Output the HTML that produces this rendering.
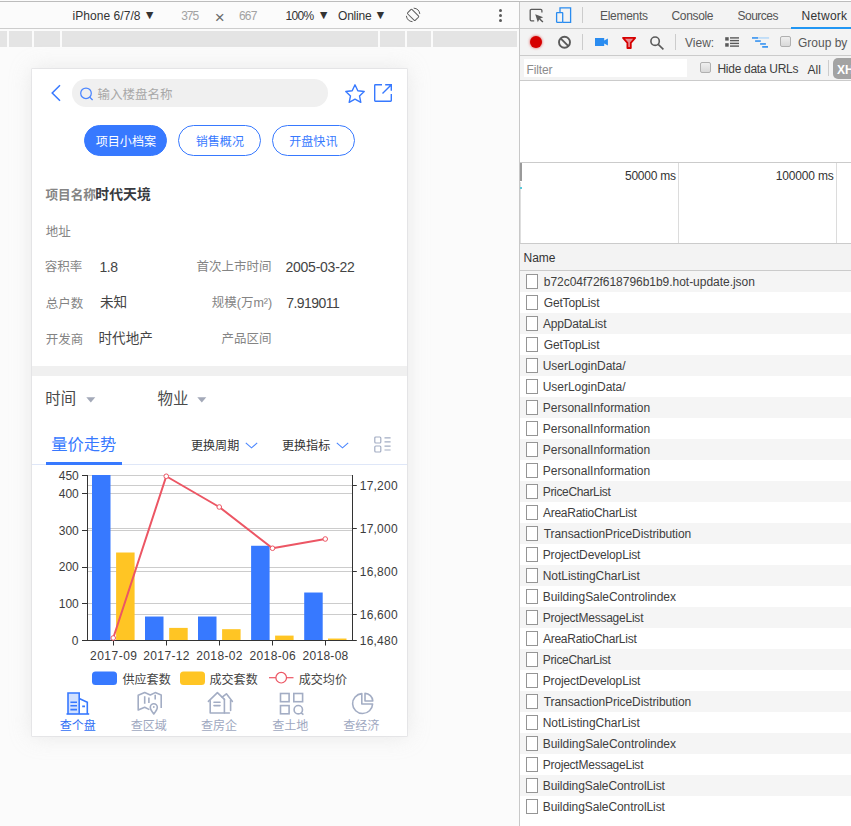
<!DOCTYPE html><html lang="zh"><head><meta charset="utf-8"><title>page</title><style>
*{box-sizing:border-box;margin:0;padding:0}
html,body{width:851px;height:826px;overflow:hidden;background:#fff}
body{position:relative;font-family:"Liberation Sans","Noto Sans CJK SC",sans-serif;font-size:12px;color:#333}
.abs{position:absolute}
.t{position:absolute;white-space:nowrap;line-height:1}
#left{position:absolute;left:0;top:0;width:519px;height:826px;background:#fbfbfb;overflow:hidden}
#topline{position:absolute;left:0;top:1px;width:851px;height:1px;background:#bcbcbc;z-index:9}
#dtb{position:absolute;left:0;top:2px;width:519px;height:26px;background:#fbfbfb}
#dtbb{position:absolute;left:0;top:28px;width:519px;height:1px;background:#cdcdcd}
#mq{position:absolute;left:0;top:31px;width:517px;height:16px;background:#e4e4e4}
#mq i{position:absolute;top:0;width:2px;height:16px;background:#fbfbfb}
#frame{position:absolute;left:32px;top:69px;width:375px;height:667px;background:#fff;box-shadow:0 0 0 .5px #d8d8dc,0 0 20px rgba(200,200,200,.36);overflow:hidden}
#divider{position:absolute;left:519px;top:2px;width:1px;height:824px;background:#c8c8c8}
#search{position:absolute;left:40px;top:10px;width:256px;height:28px;border-radius:14px;background:#f0f0f0}
.pill{position:absolute;top:56px;width:83px;height:31px;border-radius:16px;border:1px solid #3779ff;background:#fff}
.pill.on{background:#3779ff}
#band{position:absolute;left:0;top:297px;width:375px;height:10px;background:#f0f0f0}
#right{position:absolute;left:520px;top:0;width:331px;height:826px;background:#fff;overflow:hidden}
.bar{position:absolute;left:0;width:331px;background:#f3f3f3}
.hl{position:absolute;left:0;width:331px;height:1px;background:#cbcbcb}
.row{position:absolute;left:0;width:331px;height:21px}
.row.odd{background:#f5f5f5}
.row b{position:absolute;left:6px;top:3px;width:12px;height:15px;border:1px solid #959595;background:#fff}
.cb{position:absolute;width:11px;height:11px;border:1px solid #b0b0b0;border-radius:2px;background:linear-gradient(#efefef,#d9d9d9)}
.vs{position:absolute;width:1px;height:16px;background:#ccc}
</style></head><body>
<div id="left">
<div id="dtb"></div><div id="dtbb"></div>
<div id="mq"><i style="left:7px"></i><i style="left:32px"></i><i style="left:60px"></i><i style="left:378px"></i><i style="left:405px"></i><i style="left:431px"></i></div>
<div class="t" style="left:72.5px;top:10px;color:#333;font-family:'Liberation Sans',sans-serif;font-size:12px;letter-spacing:0.055px;">iPhone 6/7/8</div>
<div class="t" style="left:181.25px;top:10px;color:#a2a2a2;font-family:'Liberation Sans',sans-serif;font-size:12px;letter-spacing:-1.05px;">375</div>
<div class="t" style="left:239px;top:10px;color:#a2a2a2;font-family:'Liberation Sans',sans-serif;font-size:12px;letter-spacing:-0.8px;">667</div>
<div class="t" style="left:285.5px;top:10px;color:#333;font-family:'Liberation Sans',sans-serif;font-size:12px;letter-spacing:-0.667px;">100%</div>
<div class="t" style="left:338px;top:10px;color:#333;font-family:'Liberation Sans',sans-serif;font-size:12px;letter-spacing:-0.2px;">Online</div>
<div class="t" style="left:214.75px;top:9px;color:#6a6a6a;font-family:'Liberation Sans',sans-serif;font-size:17px;">×</div>
<div class="t" style="left:146px;top:10px;color:#333;font-family:'DejaVu Sans',sans-serif;font-size:9.5px;">▼</div>
<div class="t" style="left:320px;top:10px;color:#333;font-family:'DejaVu Sans',sans-serif;font-size:9.5px;">▼</div>
<div class="t" style="left:376.75px;top:10px;color:#333;font-family:'DejaVu Sans',sans-serif;font-size:9.5px;">▼</div>
<svg class="abs" style="left:404px;top:6px" width="18" height="18" viewBox="0 0 18 18"><g fill="none" stroke="#5c5c5c" stroke-width="1"><path d="M9.69 2.13 A6.8 6.8 0 0 1 15.83 7.95 M8.51 15.67 A6.8 6.8 0 0 1 2.37 9.85"/><rect x="6" y="3.5" width="6.2" height="10.8" rx="1" transform="rotate(-45 9.1 8.9)"/></g></svg>
<svg class="abs" style="left:498px;top:9px" width="5" height="13" viewBox="0 0 5 13"><g fill="#5a5a5a"><circle cx="2.5" cy="1.6" r="1.5"/><circle cx="2.5" cy="6.5" r="1.5"/><circle cx="2.5" cy="11.4" r="1.5"/></g></svg>
<div id="frame">
<svg class="abs" style="left:18px;top:15px" width="12" height="18" viewBox="0 0 12 18"><path d="M10 1.2 L2.2 9 L10 16.8" fill="none" stroke="#3779ff" stroke-width="1.5"/></svg>
<div id="search"></div>
<svg class="abs" style="left:47px;top:17px" width="16" height="16" viewBox="0 0 16 16"><g fill="none" stroke="#4a85ff" stroke-width="1.25"><circle cx="7" cy="7.3" r="5.3"/><path d="M10.8 11.2 L13.6 14"/></g></svg>
<svg class="abs" style="left:312px;top:14px" width="22" height="21" viewBox="0 0 22 21"><path d="M11 1.8 L13.8 7.7 L20.2 8.5 L15.5 12.9 L16.8 19.3 L11 16.1 L5.2 19.3 L6.5 12.9 L1.8 8.5 L8.2 7.7 Z" fill="none" stroke="#3779ff" stroke-width="1.4" stroke-linejoin="round"/></svg>
<svg class="abs" style="left:341px;top:14px" width="20" height="20" viewBox="0 0 20 20"><g fill="none" stroke="#3779ff" stroke-width="1.4"><path d="M9 1.7 H2.4 Q1.7 1.7 1.7 2.4 V17.6 Q1.7 18.3 2.4 18.3 H17.6 Q18.3 18.3 18.3 17.6 V11"/><path d="M9.5 10.5 L18.3 1.7 M12.2 1.7 H18.3 V7.8"/></g></svg>
<div class="pill on" style="left:52px"></div><div class="pill" style="left:146px"></div><div class="pill" style="left:240px"></div>
<div id="band"></div>
<svg class="abs" style="left:54px;top:328px" width="10" height="6" viewBox="0 0 10 6"><path d="M0.3 0.3 H9.3 L4.8 5.4 Z" fill="#a3a9b8"/></svg>
<svg class="abs" style="left:165px;top:328px" width="10" height="6" viewBox="0 0 10 6"><path d="M0.3 0.3 H9.3 L4.8 5.4 Z" fill="#a3a9b8"/></svg>
<div class="abs" style="left:0;top:395px;width:375px;height:1px;background:#dfe7f8"></div>
<div class="abs" style="left:14px;top:393px;width:76px;height:3px;background:#3779ff"></div>
<svg class="abs" style="left:213px;top:372.5px" width="13" height="7" viewBox="0 0 13 7"><path d="M0.8 0.9 L6.5 5.8 L12.2 0.9" fill="none" stroke="#4a86ff" stroke-width="1.1"/></svg>
<svg class="abs" style="left:304px;top:372.5px" width="13" height="7" viewBox="0 0 13 7"><path d="M0.8 0.9 L6.5 5.8 L12.2 0.9" fill="none" stroke="#4a86ff" stroke-width="1.1"/></svg>
<svg class="abs" style="left:342px;top:367px" width="18" height="17" viewBox="0 0 18 17"><g fill="none" stroke="#a3adc4" stroke-width="1.2"><rect x="0.8" y="1" width="6" height="6" rx="1"/><rect x="0.8" y="10" width="6" height="6" rx="1"/><path d="M10.5 1.8 H16.6 M10.5 5.8 H16.6 M10.5 10.2 H16.6 M10.5 14 H16.6"/></g></svg>
<svg class="abs" style="left:0;top:0" width="375" height="667" viewBox="0 0 375 667"><path d="M55.0 406.5 H320.5" stroke="#ccc"/><path d="M55.0 424.5 H320.5" stroke="#ccc"/><path d="M55.0 461.5 H320.5" stroke="#ccc"/><path d="M55.0 498.5 H320.5" stroke="#ccc"/><path d="M55.0 534.5 H320.5" stroke="#ccc"/><path d="M55.0 416.5 H320.5" stroke="#ccc"/><path d="M55.0 459.5 H320.5" stroke="#ccc"/><path d="M55.0 502.5 H320.5" stroke="#ccc"/><path d="M55.0 545.5 H320.5" stroke="#ccc"/><rect x="60.00" y="406.00" width="18.50" height="165.00" fill="#3779ff"/><rect x="84.10" y="483.51" width="18.50" height="87.49" fill="#ffc524"/><rect x="113.00" y="547.53" width="18.50" height="23.47" fill="#3779ff"/><rect x="137.20" y="558.90" width="18.50" height="12.10" fill="#ffc524"/><rect x="166.00" y="547.53" width="18.50" height="23.47" fill="#3779ff"/><rect x="190.10" y="560.18" width="18.50" height="10.82" fill="#ffc524"/><rect x="219.10" y="476.77" width="18.50" height="94.23" fill="#3779ff"/><rect x="243.10" y="566.60" width="18.50" height="4.40" fill="#ffc524"/><rect x="272.20" y="523.52" width="18.50" height="47.48" fill="#3779ff"/><rect x="296.00" y="569.53" width="18.50" height="1.47" fill="#ffc524"/><path d="M55.5 406.0 V572.0 M320.5 406.0 V572.0 M55.0 571.5 H320.5" stroke="#333" fill="none"/><path d="M50.0 406.5 H55.0" stroke="#333"/><path d="M50.0 424.5 H55.0" stroke="#333"/><path d="M50.0 461.5 H55.0" stroke="#333"/><path d="M50.0 498.5 H55.0" stroke="#333"/><path d="M50.0 534.5 H55.0" stroke="#333"/><path d="M50.0 571.5 H55.0" stroke="#333"/><path d="M320.5 416.5 H324.8" stroke="#333"/><path d="M320.5 459.5 H324.8" stroke="#333"/><path d="M320.5 502.5 H324.8" stroke="#333"/><path d="M320.5 545.5 H324.8" stroke="#333"/><path d="M320.5 571.5 H324.8" stroke="#333"/><path d="M81.5 571.0 V576.5" stroke="#333"/><path d="M134.5 571.0 V576.5" stroke="#333"/><path d="M187.5 571.0 V576.5" stroke="#333"/><path d="M240.5 571.0 V576.5" stroke="#333"/><path d="M293.5 571.0 V576.5" stroke="#333"/><polyline points="81.25,569.00 134.25,407.25 187.25,438.00 240.50,479.25 293.25,470.00" fill="none" stroke="#ec5664" stroke-width="2" stroke-linejoin="round"/><circle cx="81.25" cy="569.00" r="2.3" fill="#fff" stroke="#ec5664" stroke-width="1"/><circle cx="134.25" cy="407.25" r="2.3" fill="#fff" stroke="#ec5664" stroke-width="1"/><circle cx="187.25" cy="438.00" r="2.3" fill="#fff" stroke="#ec5664" stroke-width="1"/><circle cx="240.50" cy="479.25" r="2.3" fill="#fff" stroke="#ec5664" stroke-width="1"/><circle cx="293.25" cy="470.00" r="2.3" fill="#fff" stroke="#ec5664" stroke-width="1"/><rect x="60" y="602.5" width="25" height="13.5" rx="3.5" fill="#3779ff"/><rect x="148" y="602.5" width="25" height="13.5" rx="3.5" fill="#ffc524"/><path d="M237 608.7 H261.5" stroke="#ec5664" stroke-width="1.2"/><circle cx="249.2" cy="608.7" r="5.3" fill="#fff" stroke="#ec5664" stroke-width="1.2"/></svg>
<svg class="abs" style="left:34px;top:622.5px" width="24" height="24" viewBox="0 0 24 24"><rect x="2" y="1" width="11" height="21" fill="#d2e1ff"/><g fill="none" stroke="#3779ff" stroke-width="1.6"><path d="M2 22 V1 H13.2 V22"/><path d="M13.2 6.6 L21.3 10.2 V22"/><path d="M0.5 22 H23.2"/><path d="M4.4 10.2 H11 M4.4 13.8 H11 M4.4 17.6 H11 M16.2 14.4 H19"/></g></svg>
<svg class="abs" style="left:104.5px;top:622px" width="26" height="25" viewBox="0 0 26 25"><g fill="none" stroke="#a3adc4" stroke-width="1.6" stroke-linejoin="round"><path d="M12.4 18.6 L7.7 16.3 L1.2 19 V4.3 L7.7 1.6 L13.3 4 L18.2 1.6 L24.2 4 V17"/><path d="M7.7 5.2 V12.7 M11.9 6.6 V12 M18.2 3.8 V8.5"/><path d="M16.8 23 C14.6 20.2 13.3 18.4 13.3 16.2 A3.5 3.5 0 0 1 20.3 16.2 C20.3 18.4 19 20.2 16.8 23 Z" fill="#fff"/></g><circle cx="16.8" cy="16" r="0.9" fill="#a3adc4"/></svg>
<svg class="abs" style="left:174.5px;top:622px" width="27" height="24" viewBox="0 0 27 24"><g fill="none" stroke="#a3adc4" stroke-width="1.6" stroke-linejoin="round" stroke-linecap="round"><path d="M1.4 10.4 L10.4 1.6 L17.4 8.4"/><path d="M3.2 9.8 V22 H22.4"/><path d="M17.4 8.4 V22"/><path d="M15.2 6.2 L19.4 2.8 L25.4 10.4"/><path d="M23.6 9.6 V19.4"/><path d="M7 11.2 H13 M7 14.6 H13"/></g></svg>
<svg class="abs" style="left:246.5px;top:622.5px" width="26" height="24" viewBox="0 0 26 24"><g fill="none" stroke="#a3adc4" stroke-width="1.6"><rect x="1.5" y="1.5" width="8.6" height="8.2"/><rect x="14.8" y="1.5" width="8.8" height="8.2"/><rect x="1.5" y="13.6" width="8.6" height="8.2"/><circle cx="19.3" cy="17.7" r="4.2"/><path d="M22.2 20.8 L24.4 22.6"/></g></svg>
<svg class="abs" style="left:318.5px;top:622.5px" width="24" height="24" viewBox="0 0 24 24"><g fill="none" stroke="#a3adc4" stroke-width="1.6" stroke-linejoin="round"><path d="M10.8 1.6 A10 10 0 1 0 21.6 12 H10.8 Z"/><path d="M14 1.4 V9 H21.8 A8 8 0 0 0 14 1.4 Z"/></g></svg>
<div class="t" style="left:65.5px;top:20px;color:#a8a8a8;font-family:'Liberation Sans','Noto Sans CJK SC',sans-serif;font-size:12.5px;">输入楼盘名称</div>
<div class="t" style="left:63.75px;top:67px;color:#fff;font-family:'Liberation Sans','Noto Sans CJK SC',sans-serif;font-size:12.05px;">项目小档案</div>
<div class="t" style="left:163.75px;top:67px;color:#3779ff;font-family:'Liberation Sans','Noto Sans CJK SC',sans-serif;font-size:12.05px;">销售概况</div>
<div class="t" style="left:257.25px;top:67px;color:#3779ff;font-family:'Liberation Sans','Noto Sans CJK SC',sans-serif;font-size:12.05px;">开盘快讯</div>
<div class="t" style="left:13.5px;top:120px;color:#858585;font-family:'Liberation Sans','Noto Sans CJK SC',sans-serif;font-weight:bold;font-size:12.6px;">项目名称</div>
<div class="t" style="left:63.25px;top:119px;color:#383a40;font-family:'Liberation Sans','Noto Sans CJK SC',sans-serif;font-weight:bold;font-size:13.9px;">时代天境</div>
<div class="t" style="left:13.75px;top:157px;color:#848484;font-family:'Liberation Sans','Noto Sans CJK SC',sans-serif;font-size:12.5px;">地址</div>
<div class="t" style="left:12.75px;top:192px;color:#848484;font-family:'Liberation Sans','Noto Sans CJK SC',sans-serif;font-size:12.5px;">容积率</div>
<div class="t" style="left:13.75px;top:229px;color:#848484;font-family:'Liberation Sans','Noto Sans CJK SC',sans-serif;font-size:12.5px;">总户数</div>
<div class="t" style="left:13.75px;top:265px;color:#848484;font-family:'Liberation Sans','Noto Sans CJK SC',sans-serif;font-size:12.5px;">开发商</div>
<div class="t" style="left:67.5px;top:191px;color:#444;font-family:'Liberation Sans','Noto Sans CJK SC',sans-serif;font-size:14px;letter-spacing:-0.5px;">1.8</div>
<div class="t" style="left:68px;top:227px;color:#444;font-family:'Liberation Sans','Noto Sans CJK SC',sans-serif;font-size:13.6px;">未知</div>
<div class="t" style="left:66.5px;top:263px;color:#444;font-family:'Liberation Sans','Noto Sans CJK SC',sans-serif;font-size:13.6px;">时代地产</div>
<div class="t" style="left:164.5px;top:192px;color:#848484;font-family:'Liberation Sans','Noto Sans CJK SC',sans-serif;font-size:12.5px;">首次上市时间</div>
<div class="t" style="left:179.75px;top:228px;color:#848484;font-family:'Liberation Sans','Noto Sans CJK SC',sans-serif;font-size:12.5px;">规模(万m²)</div>
<div class="t" style="left:189.5px;top:264px;color:#848484;font-family:'Liberation Sans','Noto Sans CJK SC',sans-serif;font-size:12.5px;">产品区间</div>
<div class="t" style="left:253.5px;top:191px;color:#444;font-family:'Liberation Sans','Noto Sans CJK SC',sans-serif;font-size:14px;letter-spacing:-0.25px;">2005-03-22</div>
<div class="t" style="left:254.25px;top:227px;color:#444;font-family:'Liberation Sans','Noto Sans CJK SC',sans-serif;font-size:14px;letter-spacing:-0.536px;">7.919011</div>
<div class="t" style="left:13.25px;top:322px;color:#4a4a4a;font-family:'Liberation Sans','Noto Sans CJK SC',sans-serif;font-size:15.4px;">时间</div>
<div class="t" style="left:125.5px;top:322px;color:#4a4a4a;font-family:'Liberation Sans','Noto Sans CJK SC',sans-serif;font-size:15.4px;">物业</div>
<div class="t" style="left:19.25px;top:367px;color:#3779ff;font-family:'Liberation Sans','Noto Sans CJK SC',sans-serif;font-size:16.3px;">量价走势</div>
<div class="t" style="left:159px;top:371px;color:#333;font-family:'Liberation Sans','Noto Sans CJK SC',sans-serif;font-size:12.05px;">更换周期</div>
<div class="t" style="left:250px;top:371px;color:#333;font-family:'Liberation Sans','Noto Sans CJK SC',sans-serif;font-size:12.05px;">更换指标</div>
<div class="t" style="left:90.5px;top:605px;color:#444;font-family:'Liberation Sans','Noto Sans CJK SC',sans-serif;font-size:12.05px;">供应套数</div>
<div class="t" style="left:177.5px;top:605px;color:#444;font-family:'Liberation Sans','Noto Sans CJK SC',sans-serif;font-size:12.05px;">成交套数</div>
<div class="t" style="left:266.75px;top:605px;color:#444;font-family:'Liberation Sans','Noto Sans CJK SC',sans-serif;font-size:12.05px;">成交均价</div>
<div class="t" style="left:27.75px;top:651px;color:#2f6ff5;font-family:'Liberation Sans','Noto Sans CJK SC',sans-serif;font-size:12.05px;">查个盘</div>
<div class="t" style="left:98.75px;top:651px;color:#9ea8bf;font-family:'Liberation Sans','Noto Sans CJK SC',sans-serif;font-size:12.05px;">查区域</div>
<div class="t" style="left:169px;top:651px;color:#9ea8bf;font-family:'Liberation Sans','Noto Sans CJK SC',sans-serif;font-size:12.05px;">查房企</div>
<div class="t" style="left:240.25px;top:651px;color:#9ea8bf;font-family:'Liberation Sans','Noto Sans CJK SC',sans-serif;font-size:12.05px;">查土地</div>
<div class="t" style="left:311.25px;top:651px;color:#9ea8bf;font-family:'Liberation Sans','Noto Sans CJK SC',sans-serif;font-size:12.05px;">查经济</div>
<div class="t" style="left:26.75px;top:401px;color:#3c3c3c;font-family:'Liberation Sans',sans-serif;font-size:12px;">450</div>
<div class="t" style="left:26.75px;top:419px;color:#3c3c3c;font-family:'Liberation Sans',sans-serif;font-size:12px;">400</div>
<div class="t" style="left:26.75px;top:456px;color:#3c3c3c;font-family:'Liberation Sans',sans-serif;font-size:12px;">300</div>
<div class="t" style="left:26.75px;top:492px;color:#3c3c3c;font-family:'Liberation Sans',sans-serif;font-size:12px;">200</div>
<div class="t" style="left:26.75px;top:529px;color:#3c3c3c;font-family:'Liberation Sans',sans-serif;font-size:12px;">100</div>
<div class="t" style="left:39.75px;top:566px;color:#3c3c3c;font-family:'Liberation Sans',sans-serif;font-size:12px;">0</div>
<div class="t" style="left:327.75px;top:411px;color:#3c3c3c;font-family:'Liberation Sans',sans-serif;font-size:12px;letter-spacing:0.22px;">17,200</div>
<div class="t" style="left:327.75px;top:454px;color:#3c3c3c;font-family:'Liberation Sans',sans-serif;font-size:12px;letter-spacing:0.22px;">17,000</div>
<div class="t" style="left:327.75px;top:497px;color:#3c3c3c;font-family:'Liberation Sans',sans-serif;font-size:12px;letter-spacing:0.22px;">16,800</div>
<div class="t" style="left:327.75px;top:540px;color:#3c3c3c;font-family:'Liberation Sans',sans-serif;font-size:12px;letter-spacing:0.22px;">16,600</div>
<div class="t" style="left:327.75px;top:566px;color:#3c3c3c;font-family:'Liberation Sans',sans-serif;font-size:12px;letter-spacing:0.22px;">16,480</div>
<div class="t" style="left:58px;top:581px;color:#3c3c3c;font-family:'Liberation Sans',sans-serif;font-size:12px;letter-spacing:0.5px;">2017-09</div>
<div class="t" style="left:111.25px;top:581px;color:#3c3c3c;font-family:'Liberation Sans',sans-serif;font-size:12px;letter-spacing:0.375px;">2017-12</div>
<div class="t" style="left:164.25px;top:581px;color:#3c3c3c;font-family:'Liberation Sans',sans-serif;font-size:12px;letter-spacing:0.375px;">2018-02</div>
<div class="t" style="left:217.5px;top:581px;color:#3c3c3c;font-family:'Liberation Sans',sans-serif;font-size:12px;letter-spacing:0.375px;">2018-06</div>
<div class="t" style="left:270.5px;top:581px;color:#3c3c3c;font-family:'Liberation Sans',sans-serif;font-size:12px;letter-spacing:0.292px;">2018-08</div>
</div></div>
<div id="topline"></div><div id="divider"></div>
<div id="right">
<div class="bar" style="top:2px;height:26px"></div><div class="hl" style="top:28px"></div>
<div class="bar" style="top:29px;height:26px"></div><div class="hl" style="top:55px"></div>
<div class="bar" style="top:56px;height:24px"></div><div class="hl" style="top:80px"></div>
<div class="hl" style="top:162px"></div><div class="hl" style="top:243px"></div>
<div class="bar" style="top:244px;height:26px"></div><div class="hl" style="top:270px"></div>
<svg class="abs" style="left:9px;top:8px" width="16" height="15" viewBox="0 0 16 15"><path d="M12.9 4.6 V2.6 Q12.9 1.4 11.7 1.4 H2.4 Q1.2 1.4 1.2 2.6 V11.6 Q1.2 12.8 2.4 12.8 H5.2" fill="none" stroke="#5a5a5a" stroke-width="1.3"/><path d="M6.2 6.2 L14.2 9.2 L11.2 10.4 L14.4 13.6 L13.4 14.6 L10.2 11.4 L8.8 14.2 Z" fill="#5a5a5a"/></svg>
<svg class="abs" style="left:35px;top:6px" width="17" height="18" viewBox="0 0 17 18"><g fill="none" stroke="#2a8cf0" stroke-width="1.3"><path d="M5 6.6 V1.9 H15.6 V16.3 H7.7"/><rect x="1.6" y="6.6" width="6.1" height="9.7" rx=".5"/></g></svg>
<div class="vs" style="left:62px;top:7px"></div>
<div class="abs" style="left:271px;top:27px;width:60px;height:2px;background:#2196f3"></div>
<div class="abs" style="left:10px;top:36px;width:12px;height:12px;border-radius:6px;background:#d60000;box-shadow:0 0 3px rgba(214,0,0,.75)"></div>
<svg class="abs" style="left:37px;top:35px" width="15" height="15" viewBox="0 0 15 15"><g fill="none" stroke="#5a5a5a" stroke-width="1.9"><circle cx="7.5" cy="7.3" r="5.5"/><path d="M3.6 3.4 L11.4 11.2"/></g></svg>
<div class="vs" style="left:62px;top:34px"></div>
<svg class="abs" style="left:75px;top:38px" width="14" height="9" viewBox="0 0 14 9"><path d="M0 0 H9.2 V2.6 L12.9 0.4 V7.6 L9.2 5.4 V8 H0 Z" fill="#2a8cf0"/></svg>
<svg class="abs" style="left:101px;top:36px" width="16" height="14" viewBox="0 0 16 14"><path d="M2 1.9 H14.2 L9.8 6.8 V12 H6.4 V6.8 Z" fill="#e98a90" stroke="#d60000" stroke-width="1.8" stroke-linejoin="round"/></svg>
<svg class="abs" style="left:129px;top:36px" width="16" height="15" viewBox="0 0 16 15"><g fill="none" stroke="#5a5a5a" stroke-width="1.6"><circle cx="6.1" cy="5.2" r="4.2"/><path d="M9.2 8.4 L14.4 13.4"/></g></svg>
<div class="vs" style="left:155px;top:34px"></div>
<svg class="abs" style="left:204px;top:36px" width="16" height="12" viewBox="0 0 16 12"><g fill="#5a5a5a"><rect x="1.2" y="1.2" width="3.5" height="3.4"/><rect x="1.2" y="7.2" width="3.5" height="3.5"/><rect x="6" y="1.2" width="9" height="1.4"/><rect x="6" y="3.9" width="9" height="1.4"/><rect x="6" y="6.7" width="9" height="1.4"/><rect x="6" y="9.4" width="9" height="1.4"/></g></svg>
<svg class="abs" style="left:231px;top:36px" width="19" height="12" viewBox="0 0 19 12"><rect x="1" y="1.2" width="6" height="1.5" fill="#2a8cf0"/><rect x="7" y="1.2" width="11.1" height="1.5" fill="#b4d8f8"/><rect x="4.1" y="4.3" width="5.7" height="1.5" fill="#2a8cf0"/><rect x="9.1" y="7.2" width="5.8" height="1.5" fill="#2a8cf0"/><rect x="11.2" y="10.1" width="5.8" height="1.6" fill="#2a8cf0"/></svg>
<div class="cb" style="left:260px;top:35.5px"></div>
<div class="abs" style="left:4px;top:59px;width:163px;height:18px;background:#fff"></div>
<div class="cb" style="left:180px;top:62px"></div>
<div class="vs" style="left:308px;top:60px"></div>
<div class="abs" style="left:313px;top:58px;width:30px;height:21px;border-radius:5px;background:#a3a3a3"></div>
<div class="abs" style="left:0;top:182px;width:1px;height:61px;background:#dedede"></div>
<div class="abs" style="left:0;top:163px;width:2px;height:18px;background:#9a9a9a"></div>
<div class="abs" style="left:0;top:187px;width:2px;height:2px;background:#5cc8da"></div>
<div class="abs" style="left:158px;top:163px;width:1px;height:80px;background:#dcdcdc"></div>
<div class="abs" style="left:316px;top:163px;width:1px;height:80px;background:#dcdcdc"></div>
<div class="row odd" style="top:271px"><b></b></div>
<div class="row" style="top:292px"><b></b></div>
<div class="row odd" style="top:313px"><b></b></div>
<div class="row" style="top:334px"><b></b></div>
<div class="row odd" style="top:355px"><b></b></div>
<div class="row" style="top:376px"><b></b></div>
<div class="row odd" style="top:397px"><b></b></div>
<div class="row" style="top:418px"><b></b></div>
<div class="row odd" style="top:439px"><b></b></div>
<div class="row" style="top:460px"><b></b></div>
<div class="row odd" style="top:481px"><b></b></div>
<div class="row" style="top:502px"><b></b></div>
<div class="row odd" style="top:523px"><b></b></div>
<div class="row" style="top:544px"><b></b></div>
<div class="row odd" style="top:565px"><b></b></div>
<div class="row" style="top:586px"><b></b></div>
<div class="row odd" style="top:607px"><b></b></div>
<div class="row" style="top:628px"><b></b></div>
<div class="row odd" style="top:649px"><b></b></div>
<div class="row" style="top:670px"><b></b></div>
<div class="row odd" style="top:691px"><b></b></div>
<div class="row" style="top:712px"><b></b></div>
<div class="row odd" style="top:733px"><b></b></div>
<div class="row" style="top:754px"><b></b></div>
<div class="row odd" style="top:775px"><b></b></div>
<div class="row" style="top:796px"><b></b></div>
<div class="t" style="left:80px;top:10px;color:#555;font-family:'Liberation Sans',sans-serif;font-size:12px;letter-spacing:-0.286px;">Elements</div>
<div class="t" style="left:151.5px;top:10px;color:#555;font-family:'Liberation Sans',sans-serif;font-size:12px;letter-spacing:-0.333px;">Console</div>
<div class="t" style="left:217.5px;top:10px;color:#555;font-family:'Liberation Sans',sans-serif;font-size:12px;letter-spacing:-0.5px;">Sources</div>
<div class="t" style="left:281.5px;top:10px;color:#333;font-family:'Liberation Sans',sans-serif;font-size:12px;letter-spacing:0.267px;">Network</div>
<div class="t" style="left:165px;top:37px;color:#5a5a5a;font-family:'Liberation Sans',sans-serif;font-size:12px;">View:</div>
<div class="t" style="left:278px;top:37px;color:#585858;font-family:'Liberation Sans',sans-serif;font-size:12px;">Group by</div>
<div class="t" style="left:6.5px;top:64px;color:#8c8c8c;font-family:'Liberation Sans',sans-serif;font-size:12px;letter-spacing:-0.12px;">Filter</div>
<div class="t" style="left:197.5px;top:63px;color:#404040;font-family:'Liberation Sans',sans-serif;font-size:12px;letter-spacing:-0.292px;">Hide data URLs</div>
<div class="t" style="left:287.5px;top:64px;color:#3a3a3a;font-family:'Liberation Sans',sans-serif;font-size:12px;">All</div>
<div class="t" style="left:317px;top:64px;color:#fff;font-family:'Liberation Sans',sans-serif;font-weight:bold;font-size:12px;">XHR</div>
<div class="t" style="left:105px;top:170px;color:#333;font-family:'Liberation Sans',sans-serif;font-size:12px;letter-spacing:-0.257px;">50000 ms</div>
<div class="t" style="left:255.75px;top:170px;color:#333;font-family:'Liberation Sans',sans-serif;font-size:12px;letter-spacing:-0.175px;">100000 ms</div>
<div class="t" style="left:3.5px;top:252px;color:#333;font-family:'Liberation Sans',sans-serif;font-size:12px;">Name</div>
<div class="t" style="left:23.75px;top:276px;color:#404040;font-family:'Liberation Sans',sans-serif;font-size:12px;letter-spacing:-0.031px;">b72c04f72f618796b1b9.hot-update.json</div>
<div class="t" style="left:23.75px;top:297px;color:#404040;font-family:'Liberation Sans',sans-serif;font-size:12px;letter-spacing:-0.178px;">GetTopList</div>
<div class="t" style="left:23px;top:318px;color:#404040;font-family:'Liberation Sans',sans-serif;font-size:12px;letter-spacing:-0.19px;">AppDataList</div>
<div class="t" style="left:23.75px;top:339px;color:#404040;font-family:'Liberation Sans',sans-serif;font-size:12px;letter-spacing:-0.178px;">GetTopList</div>
<div class="t" style="left:22.75px;top:360px;color:#404040;font-family:'Liberation Sans',sans-serif;font-size:12px;letter-spacing:-0.046px;">UserLoginData/</div>
<div class="t" style="left:22.75px;top:381px;color:#404040;font-family:'Liberation Sans',sans-serif;font-size:12px;letter-spacing:-0.046px;">UserLoginData/</div>
<div class="t" style="left:22.75px;top:402px;color:#404040;font-family:'Liberation Sans',sans-serif;font-size:12px;">PersonalInformation</div>
<div class="t" style="left:22.75px;top:423px;color:#404040;font-family:'Liberation Sans',sans-serif;font-size:12px;">PersonalInformation</div>
<div class="t" style="left:22.75px;top:444px;color:#404040;font-family:'Liberation Sans',sans-serif;font-size:12px;">PersonalInformation</div>
<div class="t" style="left:22.75px;top:465px;color:#404040;font-family:'Liberation Sans',sans-serif;font-size:12px;">PersonalInformation</div>
<div class="t" style="left:22.75px;top:486px;color:#404040;font-family:'Liberation Sans',sans-serif;font-size:12px;letter-spacing:-0.333px;">PriceCharList</div>
<div class="t" style="left:23px;top:507px;color:#404040;font-family:'Liberation Sans',sans-serif;font-size:12px;letter-spacing:-0.269px;">AreaRatioCharList</div>
<div class="t" style="left:23.75px;top:528px;color:#404040;font-family:'Liberation Sans',sans-serif;font-size:12px;letter-spacing:-0.081px;">TransactionPriceDistribution</div>
<div class="t" style="left:22.75px;top:549px;color:#404040;font-family:'Liberation Sans',sans-serif;font-size:12px;letter-spacing:-0.141px;">ProjectDevelopList</div>
<div class="t" style="left:22.75px;top:570px;color:#404040;font-family:'Liberation Sans',sans-serif;font-size:12px;letter-spacing:-0.053px;">NotListingCharList</div>
<div class="t" style="left:22.75px;top:591px;color:#404040;font-family:'Liberation Sans',sans-serif;font-size:12px;letter-spacing:-0.039px;">BuildingSaleControlindex</div>
<div class="t" style="left:22.75px;top:612px;color:#404040;font-family:'Liberation Sans',sans-serif;font-size:12px;letter-spacing:-0.235px;">ProjectMessageList</div>
<div class="t" style="left:23px;top:633px;color:#404040;font-family:'Liberation Sans',sans-serif;font-size:12px;letter-spacing:-0.269px;">AreaRatioCharList</div>
<div class="t" style="left:22.75px;top:654px;color:#404040;font-family:'Liberation Sans',sans-serif;font-size:12px;letter-spacing:-0.333px;">PriceCharList</div>
<div class="t" style="left:22.75px;top:675px;color:#404040;font-family:'Liberation Sans',sans-serif;font-size:12px;letter-spacing:-0.141px;">ProjectDevelopList</div>
<div class="t" style="left:23.75px;top:696px;color:#404040;font-family:'Liberation Sans',sans-serif;font-size:12px;letter-spacing:-0.081px;">TransactionPriceDistribution</div>
<div class="t" style="left:22.75px;top:717px;color:#404040;font-family:'Liberation Sans',sans-serif;font-size:12px;letter-spacing:-0.053px;">NotListingCharList</div>
<div class="t" style="left:22.75px;top:738px;color:#404040;font-family:'Liberation Sans',sans-serif;font-size:12px;letter-spacing:-0.039px;">BuildingSaleControlindex</div>
<div class="t" style="left:22.75px;top:759px;color:#404040;font-family:'Liberation Sans',sans-serif;font-size:12px;letter-spacing:-0.235px;">ProjectMessageList</div>
<div class="t" style="left:22.75px;top:780px;color:#404040;font-family:'Liberation Sans',sans-serif;font-size:12px;letter-spacing:-0.086px;">BuildingSaleControlList</div>
<div class="t" style="left:22.75px;top:801px;color:#404040;font-family:'Liberation Sans',sans-serif;font-size:12px;letter-spacing:-0.086px;">BuildingSaleControlList</div>
</div></body></html>
